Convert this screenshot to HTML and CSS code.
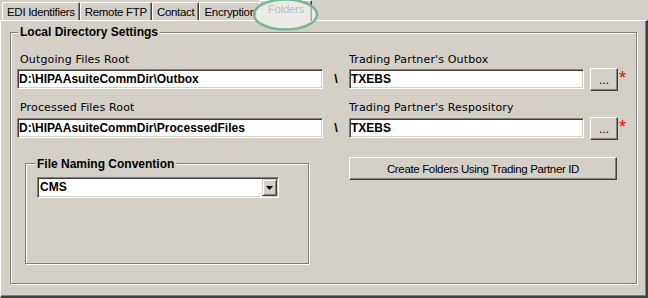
FILE: index.html
```html
<!DOCTYPE html>
<html>
<head>
<meta charset="utf-8">
<title>Folders</title>
<link rel="stylesheet" href="styles.css">
</head>
<body>
<div class="tabs">
  <div class="tab">EDI Identifiers</div>
  <div class="tab">Remote FTP</div>
  <div class="tab">Contact</div>
  <div class="tab">Encryption</div>
  <div class="tab tab-active">Folders</div>
  <svg class="highlight" width="72" height="34" viewBox="0 0 72 34"><ellipse cx="35.5" cy="14.5" rx="31.5" ry="15"/></svg>
</div>
<div class="page">
  <div class="group group-main">
    <div class="group-title">Local Directory Settings</div>

    <div class="label-row">
      <div class="label label-left">Outgoing Files Root</div>
      <div class="label">Trading Partner's Outbox</div>
    </div>
    <div class="field-row">
      <input class="field field-left" type="text" value="D:\HIPAAsuiteCommDir\Outbox">
      <span class="sep">\</span>
      <input class="field field-right" type="text" value="TXEBS">
      <button class="btn btn-browse">...</button>
      <span class="req">*</span>
    </div>

    <div class="label-row label-row-2">
      <div class="label label-left">Processed Files Root</div>
      <div class="label">Trading Partner's Respository</div>
    </div>
    <div class="field-row field-row-2">
      <input class="field field-left" type="text" value="D:\HIPAAsuiteCommDir\ProcessedFiles">
      <span class="sep">\</span>
      <input class="field field-right" type="text" value="TXEBS">
      <button class="btn btn-browse">...</button>
      <span class="req">*</span>
    </div>

    <div class="bottom-row">
      <div class="group group-inner">
        <div class="group-title">File Naming Convention</div>
        <div class="combo">
          <span class="combo-text">CMS</span>
          <span class="combo-btn"><svg width="7" height="4" viewBox="0 0 7 4"><polygon points="0,0 7,0 3.5,4" fill="#000"/></svg></span>
        </div>
      </div>
      <button class="btn btn-create">Create Folders Using Trading Partner ID</button>
    </div>
  </div>
</div>
</body>
</html>
```
FILE: styles.css
```css
* { box-sizing: border-box; }
html, body { margin: 0; padding: 0; }
body {
  background: #d4d0c8;
  width: 648px;
  height: 298px;
  overflow: hidden;
  font-family: "Liberation Sans", Arial, sans-serif;
  font-size: 11px;
  color: #000;
}

/* tab strip */
.tabs {
  position: relative;
  display: flex;
  align-items: flex-start;
  height: 20px;
  padding-left: 2px;
}
.tab {
  margin-top: 2px;
  height: 18px;
  padding: 3px 4px 0 4px;
  border-top: 1px solid #fff;
  border-left: 1px solid #fff;
  border-right: 1px solid #404040;
  border-top-left-radius: 2px;
  border-top-right-radius: 2px;
  box-shadow: inset -1px 0 0 #808080;
  font-size: 11.5px;
  line-height: 13px;
  letter-spacing: -0.3px;
  white-space: nowrap;
}
.tab-active {
  position: relative;
  z-index: 1;
  margin-top: 0;
  height: 21px;
  margin-left: -2px;
  padding: 2px 7px 0 8px;
  background: #d4d0c8;
  color: #6a6a6a;
}
.highlight {
  position: absolute;
  left: 250px;
  top: 0;
  z-index: 2;
  overflow: visible;
}
.highlight ellipse {
  fill: rgba(255, 255, 255, 0.55);
  stroke: #79b597;
  stroke-width: 2.5;
}

/* tab page */
.page {
  width: 648px;
  height: 278px;
  border-top: 1px solid #fff;
  border-left: 1px solid #fff;
  border-right: 2px solid #404040;
  border-bottom: 2px solid #404040;
  box-shadow: inset -1px -1px 0 #808080;
}

/* group boxes */
.group {
  border: 1px solid #808080;
  box-shadow: inset 1px 1px 0 #fff, 1px 1px 0 #fff;
}
.group-title {
  width: max-content;
  padding: 0 2px;
  background: #d4d0c8;
  font-weight: bold;
  font-size: 12px;
  line-height: 14px;
}
.group-main {
  width: 627px;
  margin: 11px 0 0 9px;
  padding: 0 0 19px 6px;
}
.group-main > .group-title {
  margin: -8px 0 0 1px;
}

/* labels */
.label-row {
  display: flex;
  margin-top: 14px;
  font-family: "DejaVu Sans", sans-serif;
  font-size: 11px;
  line-height: 13px;
  letter-spacing: 0.15px;
  white-space: nowrap;
}
.label-row-2 { margin-top: 10px; }
.label-left {
  width: 332px;
  padding-left: 3px;
}

/* field rows */
.field-row {
  display: flex;
  align-items: flex-start;
  height: 23px;
  margin-top: 2px;
}
.field-row-2 { margin-top: 3px; }
.field {
  height: 20px;
  margin: 1px 0 0 0;
  padding: 0 0 0 1px;
  border: 1px solid;
  border-color: #808080 #fff #fff #808080;
  box-shadow: inset 1px 1px 0 #404040, inset -1px -1px 0 #d4d0c8;
  background: #fff;
  font-family: "Liberation Sans", Arial, sans-serif;
  font-weight: bold;
  font-size: 12px;
  color: #000;
  outline: none;
  border-radius: 0;
}
.field-left { width: 306px; }
.field-right { width: 235px; }
.sep {
  width: 26px;
  text-align: center;
  font-weight: bold;
  font-size: 12.5px;
  line-height: 23px;
}
.btn {
  border: 1px solid;
  border-color: #fff #404040 #404040 #fff;
  box-shadow: inset -1px -1px 0 #808080;
  background: #d4d0c8;
  padding: 0;
  font-family: "Liberation Sans", Arial, sans-serif;
  font-size: 11px;
  color: #000;
  border-radius: 0;
}
.btn-browse {
  width: 28px;
  height: 23px;
  margin-left: 6px;
  font-size: 12px;
}
.req {
  margin: 1px 0 0 1px;
  color: #f00;
  font-size: 18px;
  line-height: 18px;
}

/* bottom row */
.bottom-row {
  display: flex;
  align-items: flex-start;
}
.group-inner {
  width: 284px;
  height: 101px;
  margin: 23px 0 0 8px;
  padding: 0 0 0 11px;
}
.group-inner > .group-title {
  margin: -7px 0 0 -2px;
}
.combo {
  display: flex;
  width: 242px;
  height: 21px;
  margin-top: 6px;
  padding: 1px;
  border: 1px solid;
  border-color: #808080 #fff #fff #808080;
  box-shadow: inset 1px 1px 0 #404040, inset -1px -1px 0 #d4d0c8;
  background: #fff;
}
.combo-text {
  flex: 1;
  padding-left: 1px;
  font-weight: bold;
  font-size: 12px;
  line-height: 17px;
}
.combo-btn {
  display: flex;
  align-items: center;
  justify-content: center;
  width: 15px;
  height: 17px;
  border: 1px solid;
  border-color: #d4d0c8 #404040 #404040 #d4d0c8;
  box-shadow: inset 1px 1px 0 #fff, inset -1px -1px 0 #808080;
  background: #d4d0c8;
}
.btn-create {
  width: 268px;
  height: 23px;
  margin: 17px 0 0 40px;
  font-size: 11.5px;
  letter-spacing: -0.35px;
}
```
